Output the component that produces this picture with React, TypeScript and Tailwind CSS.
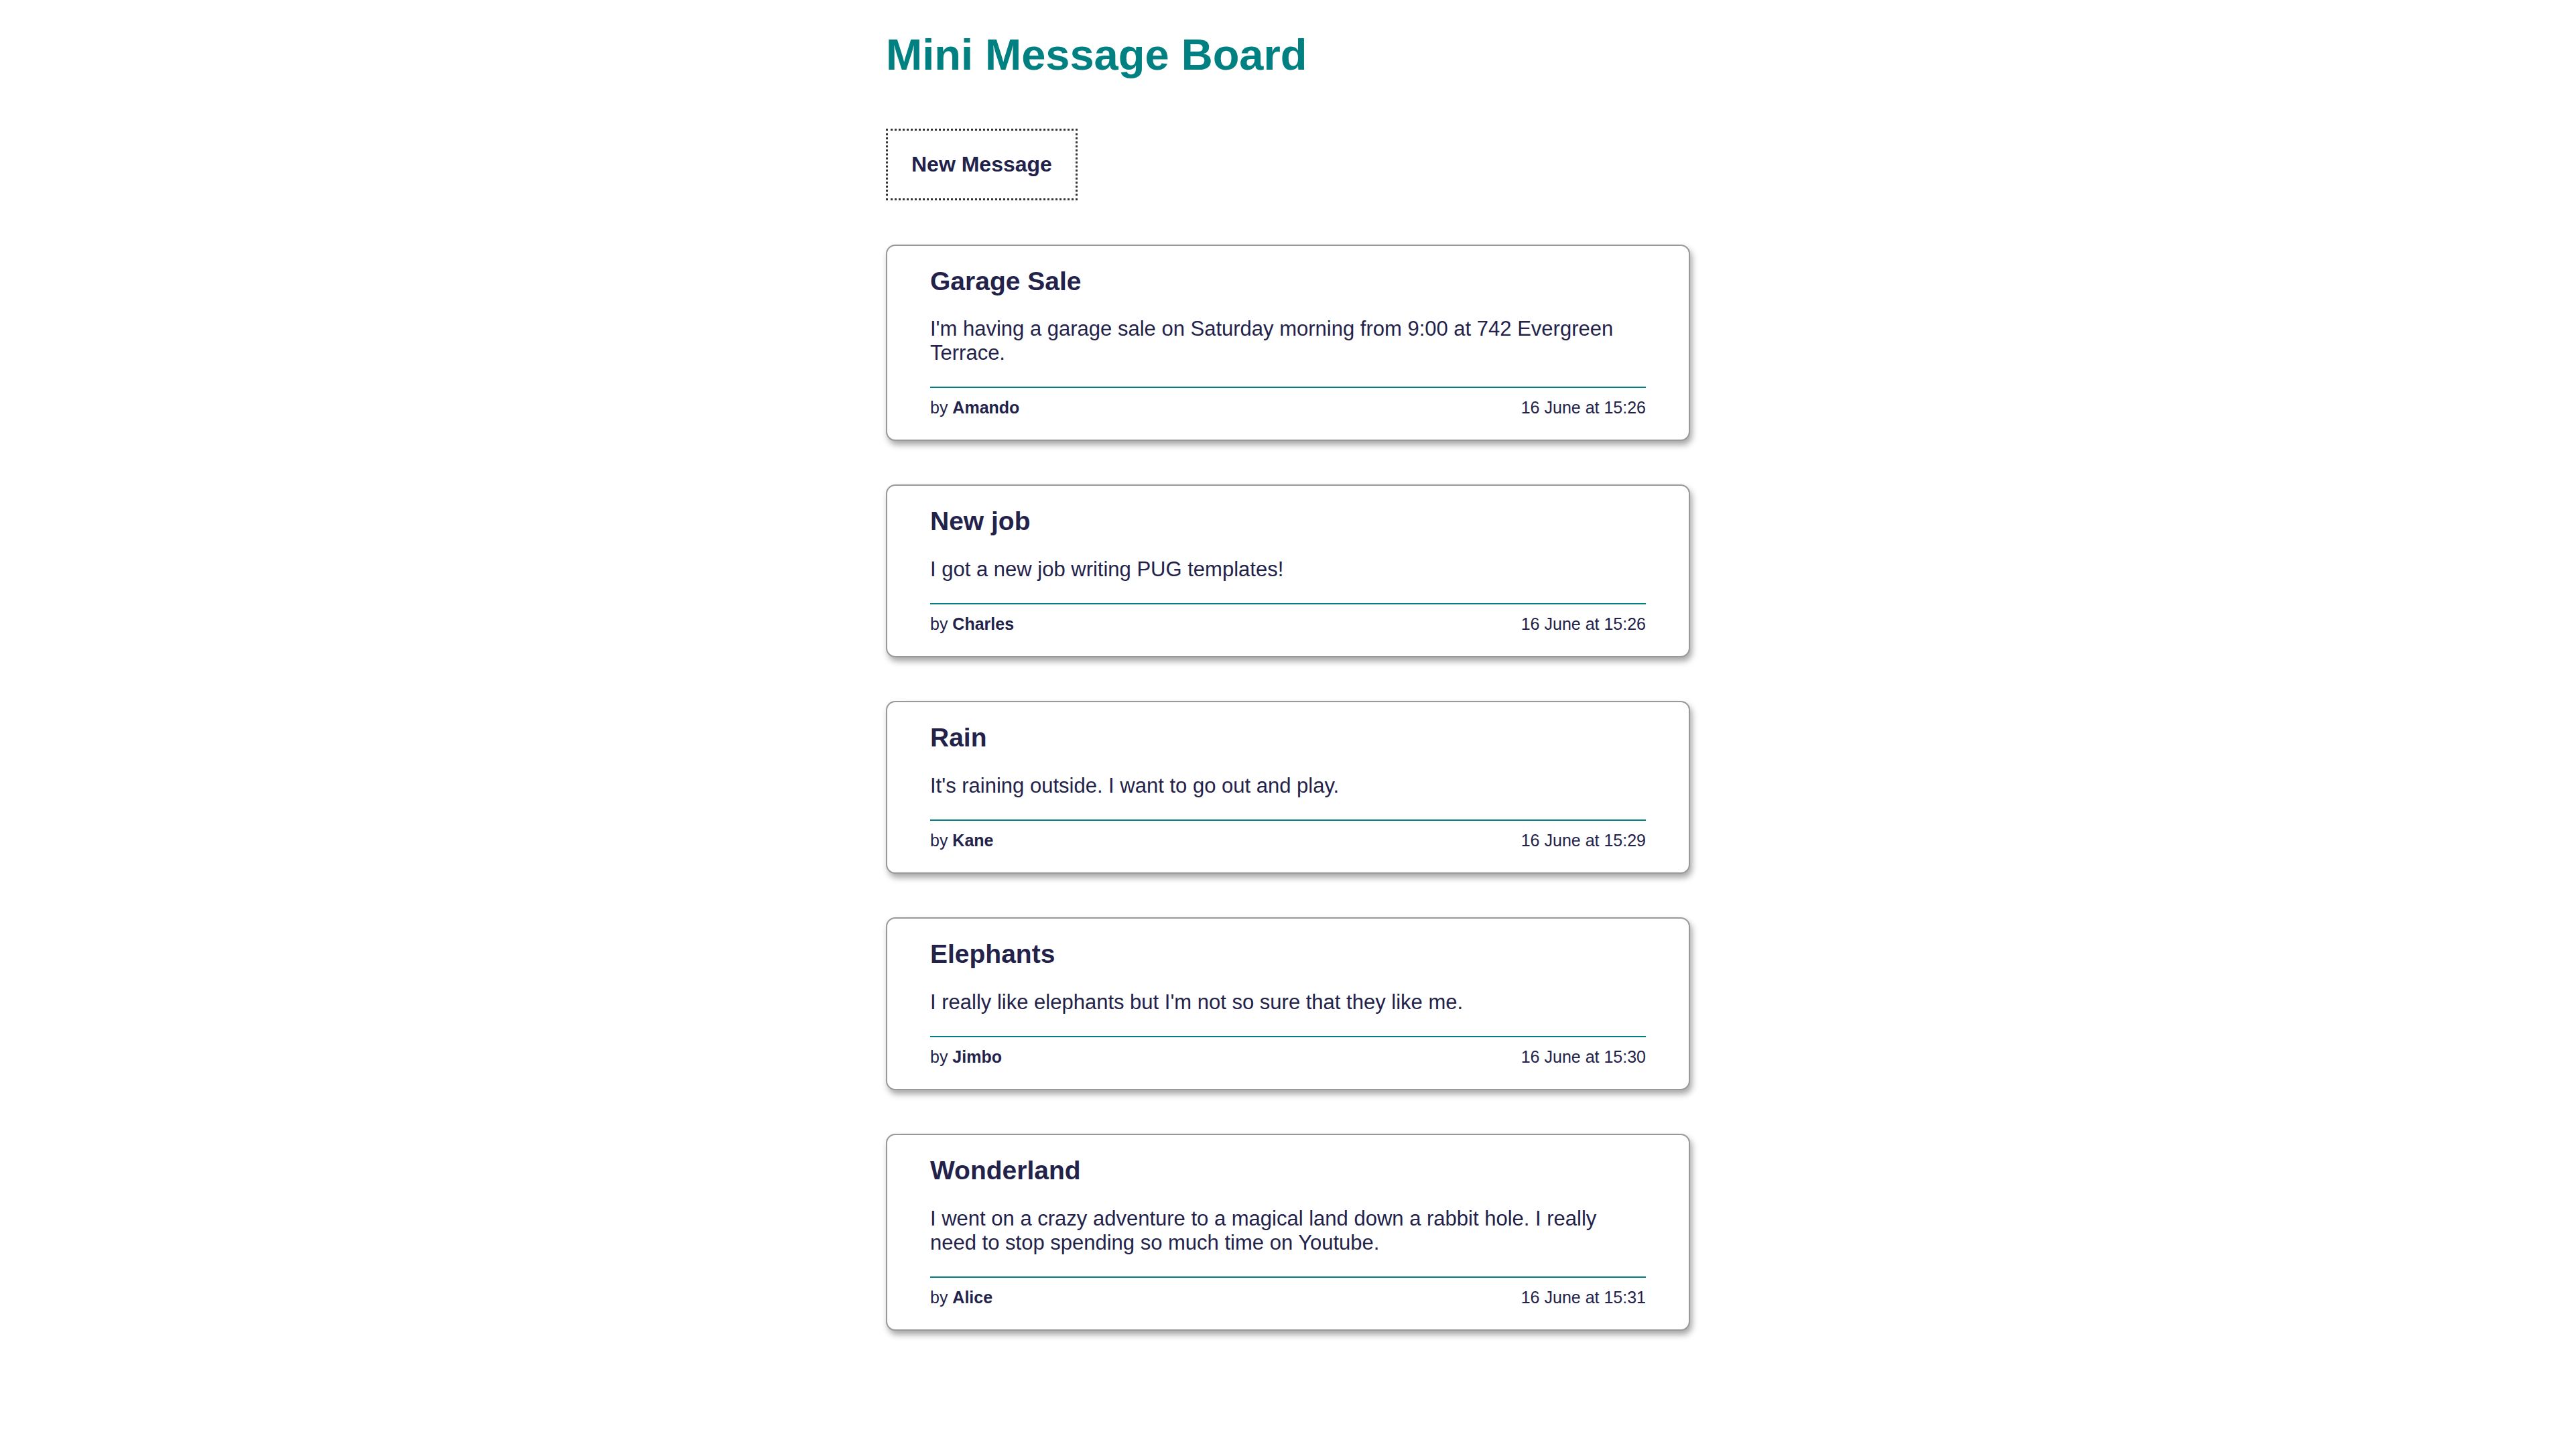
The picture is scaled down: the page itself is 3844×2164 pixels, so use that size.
import React from "react";

type Msg = { title: string; text: string; user: string; added: string };

const messages: Msg[] = [
  {
    title: "Garage Sale",
    text: "I'm having a garage sale on Saturday morning from 9:00 at 742 Evergreen Terrace.",
    user: "Amando",
    added: "16 June at 15:26",
  },
  {
    title: "New job",
    text: "I got a new job writing PUG templates!",
    user: "Charles",
    added: "16 June at 15:26",
  },
  {
    title: "Rain",
    text: "It's raining outside. I want to go out and play.",
    user: "Kane",
    added: "16 June at 15:29",
  },
  {
    title: "Elephants",
    text: "I really like elephants but I'm not so sure that they like me.",
    user: "Jimbo",
    added: "16 June at 15:30",
  },
  {
    title: "Wonderland",
    text: "I went on a crazy adventure to a magical land down a rabbit hole. I really need to stop spending so much time on Youtube.",
    user: "Alice",
    added: "16 June at 15:31",
  },
];

export default function App() {
  return (
    <div className="min-h-screen bg-white text-[#22224a] font-['Liberation_Sans',Arial,sans-serif]">
      <div className="mx-auto w-[1200px] pb-[120px]">
        <h1 className="mt-[45px] text-[65px] font-bold leading-[1.15] text-[#008080]">
          Mini Message Board
        </h1>
        <button className="mt-[72px] border-[3px] border-dotted border-[#333333] px-[35px] py-[32px] text-[32px] font-bold leading-[1.15] text-[#22224a]">
          New Message
        </button>
        <div className="mt-[66px] flex flex-col gap-[65px]">
          {messages.map((m) => (
            <div
              key={m.title}
              className="rounded-[14px] border-2 border-[#999999] bg-white px-[64px] pt-[30px] pb-[33px] shadow-[3px_6px_10px_rgba(0,0,0,0.35)]"
            >
              <h2 className="text-[39px] font-bold leading-[1.2]">{m.title}</h2>
              <p className="mt-[30px] text-[31px] leading-[35.5px]">{m.text}</p>
              <div className="mt-[33px] h-[2px] bg-[#008080]" />
              <div className="mt-[15px] flex justify-between text-[25px] leading-[1.15]">
                <span>
                  by <span className="font-bold">{m.user}</span>
                </span>
                <span>{m.added}</span>
              </div>
            </div>
          ))}
        </div>
      </div>
    </div>
  );
}
